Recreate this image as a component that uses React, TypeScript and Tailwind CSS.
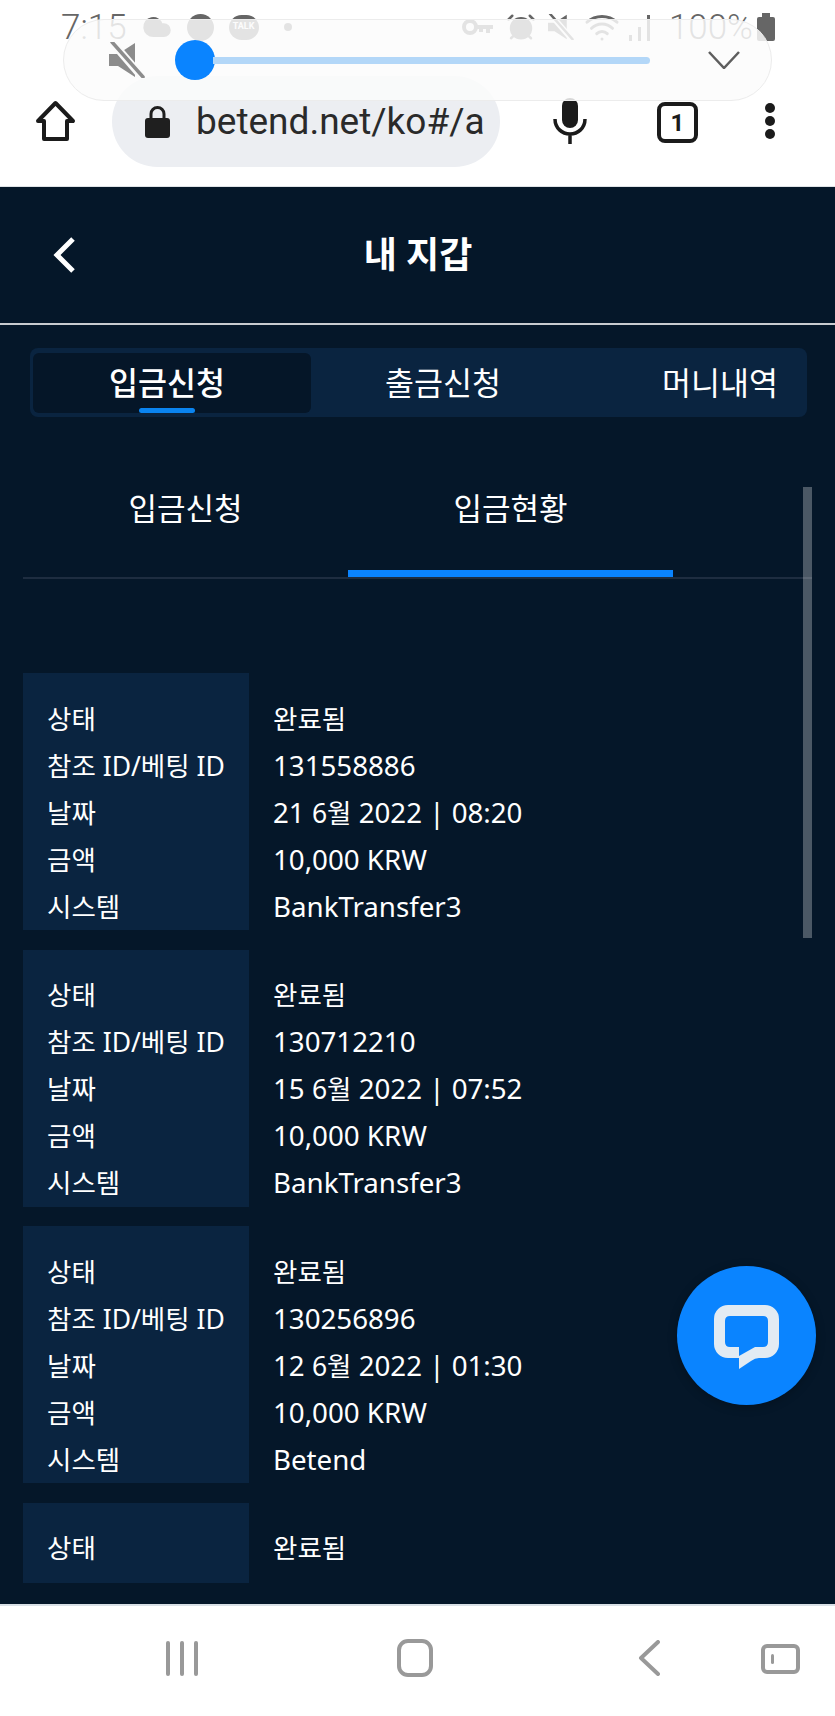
import React from 'react';
import { Cloud, AlarmClock, Wifi } from 'lucide-react';

const records = [
  { id: '131558886', day: '21', time: '2022 | 08:20', system: 'BankTransfer3' },
  { id: '130712210', day: '15', time: '2022 | 07:52', system: 'BankTransfer3' },
  { id: '130256896', day: '12', time: '2022 | 01:30', system: 'Betend' },
];

const Ko: React.FC<{ children: React.ReactNode }> = ({ children }) => (
  <span className="text-[26.5px]">{children}</span>
);

const Row: React.FC<{ label: string; children: React.ReactNode }> = ({ label, children }) => (
  <div className="flex h-[47px] items-center">
    <div className="mt-[2px] w-[226px] pl-[24px] text-[26.5px]">{label}</div>
    <div className="pl-[24px] text-[27.7px]">{children}</div>
  </div>
);

const Record: React.FC<{ id: string; day: string; time: string; system: string }> = ({ id, day, time, system }) => (
  <div className="relative mb-[19.5px] pt-[22px]">
    <div className="absolute inset-y-0 left-0 w-[226px] bg-[#0a2440]" />
    <div className="relative">
      <Row label="상태"><Ko>완료됨</Ko></Row>
      <Row label="참조 ID/베팅 ID">{id}</Row>
      <Row label="날짜">{day} <Ko>6월</Ko> {time}</Row>
      <Row label="금액">10,000 KRW</Row>
      <Row label="시스템">{system}</Row>
    </div>
  </div>
);

const MuteIcon: React.FC<{ color: string; cut: string; className?: string }> = ({ color, cut, className }) => (
  <svg width="36" height="36" viewBox="0 0 36 36" className={className}>
    <path d="M0 12h9L26 1v34L9 24H0z" fill={color} />
    <path d="M3 0l31 36" stroke={cut} strokeWidth="8" />
    <path d="M3 0l31 35" stroke={color} strokeWidth="3.5" strokeLinecap="round" />
  </svg>
);

const StatusBar = () => (
  <div className="flex h-[54px] items-center pl-[61px] pr-[60px] text-[#666] [font-family:Roboto,sans-serif]">
    <span className="text-[35px] font-light leading-none">7:15</span>
    <Cloud size={30} fill="#666" stroke="#666" className="ml-[15px]" />
    <div className="relative ml-[15px] h-[27px] w-[27px] rounded-full bg-[#666]" />
    <div className="ml-[15px] flex h-[25px] w-[30px] items-center justify-center rounded-full bg-[#666] text-[9px] font-bold text-white">
      TALK
    </div>
    <div className="ml-[25px] h-[8px] w-[8px] rounded-full bg-[#666]" />
    <div className="flex-1" />
    <svg width="31" height="18" viewBox="0 0 31 18" fill="none" className="mr-[13px]">
      <circle cx="8" cy="9" r="6" stroke="#666" strokeWidth="4" />
      <path d="M14 7h17v4h-3v4h-4v-4h-3v3h-4v-3h-3z" fill="#666" />
    </svg>
    <AlarmClock size={30} fill="#666" stroke="#666" className="mr-[12px]" />
    <MuteIcon color="#666" cut="#fff" className="mr-[10px] h-[26px] w-[26px]" />
    <Wifi size={36} stroke="#666" className="mr-[9px]" />
    <div className="mr-[15px] flex h-[28px] w-[25px] items-end gap-[6px]">
      <div className="h-[6px] w-[3px] bg-[#666]" />
      <div className="h-[14px] w-[3px] bg-[#666]" />
      <div className="h-[26px] w-[3px] bg-[#666]" />
    </div>
    <span className="text-[35px] font-light leading-none">100%</span>
    <div className="ml-[4px] flex h-[28px] w-[18px] flex-col items-center">
      <div className="h-[4px] w-[8px] bg-[#666]" />
      <div className="w-full flex-1 rounded-[2px] bg-[#666]" />
    </div>
  </div>
);

const VolumePanel = () => (
  <div className="absolute left-[63px] top-[19px] z-10 flex h-[82px] w-[709px] items-center rounded-full border border-[#ececec] bg-[#fbfbfb]/[0.84] pl-[45px]">
    <MuteIcon color="#8c8c8c" cut="#fbfbfb" className="shrink-0" />
    <div className="ml-[30px] h-[40px] w-[40px] shrink-0 rounded-full bg-[#0a84ff]" />
    <div className="-ml-[2px] h-[7px] w-[437px] rounded-r-full bg-[#b3d7f8]" />
    <svg width="32" height="18" viewBox="0 0 32 18" fill="none" className="ml-[58px] shrink-0">
      <path d="M1 1l15 16L31 1" stroke="#5e5e5e" strokeWidth="2.5" />
    </svg>
  </div>
);

const Toolbar = () => (
  <div className="flex items-start pl-[35px]">
    <svg width="41" height="42" viewBox="0 0 41 42" fill="none" className="mt-[46px] shrink-0">
      <path d="M20.5 3L38 21h-6v18H9V21H3z" stroke="#1b1b1b" strokeWidth="4" strokeLinejoin="round" />
    </svg>
    <div className="ml-[36px] mt-[22px] flex h-[91px] w-[388px] shrink-0 items-center rounded-[46px] bg-[#eceef2] pl-[33px]">
      <svg width="25" height="32" viewBox="0 0 25 32" className="shrink-0">
        <path d="M6 13V8a6.5 6.5 0 0 1 13 0v5" fill="none" stroke="#1f1f1f" strokeWidth="3" />
        <rect x="0" y="12" width="25" height="20" rx="3" fill="#1f1f1f" />
      </svg>
      <span className="ml-[26px] whitespace-nowrap text-[37px] leading-none text-[#2a2a2a] [font-family:Roboto,sans-serif]">
        betend.net/ko#/a
      </span>
    </div>
    <svg width="34" height="46" viewBox="0 0 34 46" fill="none" className="ml-[53px] mt-[44px] shrink-0">
      <rect x="9" y="0" width="16" height="30" rx="8" fill="#1b1b1b" />
      <path d="M2 21c0 9 7 15 15 15s15-6 15-15M17 36v10" stroke="#1b1b1b" strokeWidth="3.5" />
    </svg>
    <div className="ml-[70px] mt-[48px] flex h-[41px] w-[41px] shrink-0 items-center justify-center rounded-[8px] border-[4px] border-[#1b1b1b] text-[24px] font-bold text-[#1b1b1b] [font-family:Roboto,sans-serif]">
      1
    </div>
    <div className="ml-[67px] mt-[49px] flex h-[36px] shrink-0 flex-col justify-between">
      <div className="h-[10px] w-[10px] rounded-full bg-[#1b1b1b]" />
      <div className="h-[10px] w-[10px] rounded-full bg-[#1b1b1b]" />
      <div className="h-[10px] w-[10px] rounded-full bg-[#1b1b1b]" />
    </div>
  </div>
);

const BottomNav = () => (
  <div className="flex h-[112px] items-center border-t-2 border-[#d9e0e6] bg-white pb-[6px]">
    <div className="ml-[166px] flex h-[35px] gap-[10px]">
      <div className="h-full w-[4px] rounded-full bg-[#999]" />
      <div className="h-full w-[4px] rounded-full bg-[#999]" />
      <div className="h-full w-[4px] rounded-full bg-[#999]" />
    </div>
    <div className="ml-[199px] h-[38px] w-[36px] rounded-[11px] border-[4px] border-[#999]" />
    <svg width="22" height="36" viewBox="0 0 22 36" fill="none" className="ml-[205px]">
      <path d="M20 2L3 18l17 16" stroke="#999" strokeWidth="4" strokeLinecap="round" strokeLinejoin="round" />
    </svg>
    <div className="ml-[101px] mt-[2px] flex h-[30px] w-[39px] items-center rounded-[6px] border-[4px] border-[#999] pl-[6px]">
      <div className="h-[10px] w-[3px] rounded-full bg-[#999]" />
    </div>
  </div>
);

const App: React.FC = () => {
  return (
    <div className="relative flex h-[1716px] w-[835px] flex-col overflow-hidden bg-white [font-family:'Noto_Sans','Noto_Sans_CJK_KR',sans-serif]">
      <div className="relative h-[187px] shrink-0 overflow-hidden border-b border-[#dfe3e6] bg-white">
        <StatusBar />
        <Toolbar />
        <VolumePanel />
      </div>

      <div className="relative flex-1 overflow-hidden bg-[#051729] text-white">
        <div className="flex h-[138px] items-center border-b-2 border-[#c9ccd0] pl-[52px] pr-[75px]">
          <svg width="24" height="38" viewBox="0 0 24 38" fill="none" className="shrink-0">
            <path d="M21 3L5 19l16 16" stroke="#fff" strokeWidth="5" />
          </svg>
          <div className="flex-1 text-center text-[36px] font-bold leading-none">내 지갑</div>
        </div>

        <div className="ml-[30px] mr-[28px] mt-[23px] flex h-[69px] items-center rounded-[8px] bg-[#0a2440] text-[31.5px]">
          <div className="relative ml-[3px] flex h-[60px] w-[278px] items-center justify-center rounded-[6px] bg-[#051628] pr-[10px] font-medium">
            입금신청
            <div className="absolute bottom-0 left-[106px] h-[5px] w-[56px] rounded-full bg-[#0a84f0]" />
          </div>
          <div className="w-[264px] text-center">출금신청</div>
          <div className="whitespace-nowrap pl-[87px]">머니내역</div>
        </div>

        <div className="ml-[23px] mt-[68px] flex h-[94px] w-[789px] border-b-2 border-[#1e2d40] text-[31px]">
          <div className="flex h-[92px] w-[325px] items-start justify-center">입금신청</div>
          <div className="flex h-[92px] w-[325px] items-start justify-center border-b-[7px] border-[#0a84ff]">입금현황</div>
        </div>

        <div className="ml-[23px] mt-[94px]">
          {records.map((r) => (
            <Record key={r.id} id={r.id} day={r.day} time={r.time} system={r.system} />
          ))}
          <div className="relative pb-[11px] pt-[22px]">
            <div className="absolute inset-y-0 left-0 w-[226px] bg-[#0a2440]" />
            <div className="relative">
              <Row label="상태"><Ko>완료됨</Ko></Row>
            </div>
          </div>
        </div>

        {/* scrollbar */}
        <div className="absolute left-[803px] top-[300px] h-[451px] w-[9px] bg-white/[0.28]" />

        {/* chat button */}
        <div className="absolute left-[677px] top-[1079px] flex h-[139px] w-[139px] items-center justify-center rounded-full bg-[#0a84ff] shadow-[0_2px_10px_rgba(0,0,0,0.25)]">
          <svg width="66" height="66" viewBox="0 0 66 66" className="mt-[2px]">
            <path
              fillRule="evenodd"
              fill="#e2ebf3"
              d="M14 1H51a14 14 0 0 1 14 14V40a14 14 0 0 1-14 14H45Q41 54 37 57L25 65V54H14a14 14 0 0 1-14-14V15A14 14 0 0 1 14 1ZM16 12H49Q54 12 54 17V38Q54 43 49 43H41L25 52V43H16Q11 43 11 38V17Q11 12 16 12Z"
            />
          </svg>
        </div>
      </div>

      <BottomNav />
    </div>
  );
};

export default App;
